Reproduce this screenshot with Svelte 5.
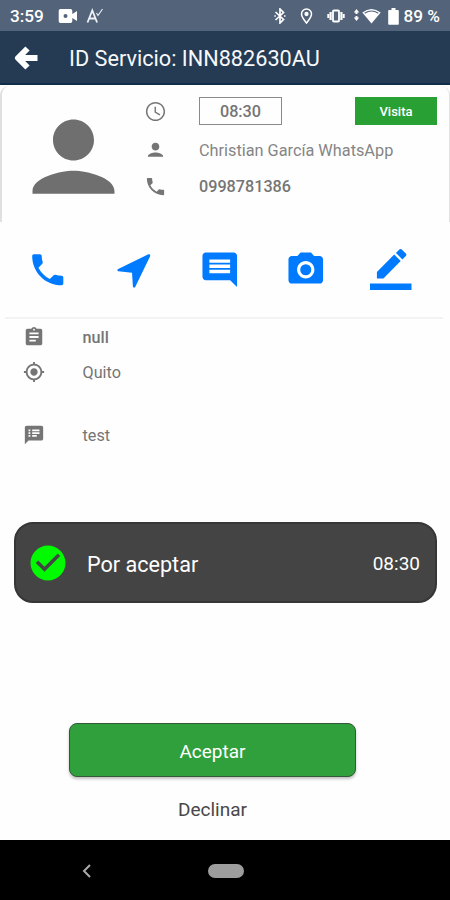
<script lang="ts">
	const icons = {
		clock:
			'M11.99 2C6.47 2 2 6.48 2 12s4.47 10 9.99 10C17.52 22 22 17.52 22 12S17.52 2 11.99 2zM12 20.4c-4.64 0-8.4-3.76-8.4-8.4s3.76-8.4 8.4-8.4 8.4 3.76 8.4 8.4-3.76 8.4-8.4 8.4zM12.5 7H11v6l5.25 3.15.75-1.23-4.5-2.67z',
		person:
			'M12 12c2.21 0 4-1.79 4-4s-1.79-4-4-4-4 1.79-4 4 1.79 4 4 4zm0 2c-2.67 0-8 1.34-8 4v.5h16V18c0-2.66-5.33-4-8-4z',
		phone:
			'M6.62 10.79c1.44 2.83 3.76 5.14 6.59 6.59l2.2-2.2c.27-.27.67-.36 1.02-.24 1.12.37 2.33.57 3.57.57.55 0 1 .45 1 1V20c0 .55-.45 1-1 1-9.39 0-17-7.61-17-17 0-.55.45-1 1-1h3.5c.55 0 1 .45 1 1 0 1.25.2 2.45.57 3.57.11.35.03.74-.25 1.02l-2.2 2.2z',
		navigate:
			'M20.2 3.2 L3 11.6 C2.3 12 2.4 12.8 3.1 12.9 L11 13.7 L11.5 21.6 C11.6 22.5 12.5 22.6 12.9 21.8 L21.4 4.3 C21.8 3.3 21.1 2.8 20.2 3.2z',
		comment:
			'M21.99 4c0-1.1-.89-2-1.99-2H4c-1.1 0-2 .9-2 2v12c0 1.1.9 2 2 2h14l4 4-.01-18zM18 14H6v-2h12v2zm0-3H6V9h12v2zm0-3H6V6h12v2z',
		camera:
			'M12 8.8a3.2 3.2 0 1 0 0 6.4 3.2 3.2 0 1 0 0-6.4zM9 2L7.17 4H4c-1.1 0-2 .9-2 2v12c0 1.1.9 2 2 2h16c1.1 0 2-.9 2-2V6c0-1.1-.9-2-2-2h-3.17L15 2H9zm3 15c-2.76 0-5-2.24-5-5s2.24-5 5-5 5 2.24 5 5-2.24 5-5 5z',
		edit: 'M17.75 7L14 3.25l-10 10V17h3.75l10-10zm2.96-2.96c.39-.39.39-1.02 0-1.41L18.37.29c-.39-.39-1.02-.39-1.41 0L15 2.25 18.75 6l1.96-1.96zM0 20h24v4H0z',
		clipboard:
			'M19 3h-4.18C14.4 1.84 13.3 1 12 1c-1.3 0-2.4.84-2.82 2H5c-1.1 0-2 .9-2 2v14c0 1.1.9 2 2 2h14c1.1 0 2-.9 2-2V5c0-1.1-.9-2-2-2zm-7 0c.55 0 1 .45 1 1s-.45 1-1 1-1-.45-1-1 .45-1 1-1zm2 14H7v-2h7v2zm3-4H7v-2h10v2zm0-4H7V7h10v2z',
		location:
			'M12 8c-2.21 0-4 1.79-4 4s1.79 4 4 4 4-1.79 4-4-1.79-4-4-4zm8.94 3c-.46-4.17-3.77-7.48-7.94-7.94V1h-2v2.06C6.83 3.52 3.52 6.83 3.06 11H1v2h2.06c.46 4.17 3.77 7.48 7.94 7.94V23h2v-2.06c4.17-.46 7.48-3.77 7.94-7.94H23v-2h-2.06zM12 19c-3.87 0-7-3.13-7-7s3.13-7 7-7 7 3.13 7 7-3.13 7-7 7z',
		notes:
			'M20 2H4c-1.1 0-1.99.9-1.99 2L2 22l4-4h14c1.1 0 2-.9 2-2V4c0-1.1-.9-2-2-2zM8 14H6v-2h2v2zm0-3H6V9h2v2zm0-3H6V6h2v2zm7 6h-5v-2h5v2zm3-3h-8V9h8v2zm0-3h-8V6h8v2z',
		check:
			'M12 2C6.48 2 2 6.48 2 12s4.48 10 10 10 10-4.48 10-10S17.52 2 12 2zm-2 15l-5-5 1.41-1.41L10 14.17l7.59-7.59L19 8l-9 9z'
	};

	const actions = [
		{ icon: icons.phone, label: 'Llamar' },
		{ icon: icons.navigate, label: 'Navegar' },
		{ icon: icons.comment, label: 'Mensaje' },
		{ icon: icons.camera, label: 'Cámara' },
		{ icon: icons.edit, label: 'Firmar' }
	];

	const service = {
		id: 'INN882630AU',
		time: '08:30',
		type: 'Visita',
		client: 'Christian García WhatsApp',
		phone: '0998781386',
		task: 'null',
		city: 'Quito',
		notes: 'test',
		status: 'Por aceptar'
	};
</script>

{#snippet icon(path: string, size: number)}
	<svg width={size} height={size} viewBox="0 0 24 24" fill="currentColor" aria-hidden="true">
		<path d={path} />
	</svg>
{/snippet}

<div class="screen">
	<div class="statusbar">
		<span class="statusbar__clock">3:59</span>
		<svg width="20" height="16" viewBox="0 0 20 16" fill="#fff">
			<path fill-rule="evenodd" d="M2.5 1h10a1.8 1.8 0 0 1 1.8 1.8V6L19 3v10l-4.7-3v3.2a1.8 1.8 0 0 1-1.8 1.8h-10A1.8 1.8 0 0 1 .7 13.2V2.8A1.8 1.8 0 0 1 2.5 1zM7.5 6a2 2 0 1 0 0 4 2 2 0 1 0 0-4z" />
		</svg>
		<svg class="statusbar__assist" width="18" height="16" viewBox="0 0 18 16" fill="none" stroke="#eef1f5">
			<path d="M1.5 14.500L6.300 2.500l4.800 12M3.300 10.500h6" stroke-width="1.8" />
			<path d="M10.500 5l1.500 2.500L16.500 1" stroke-width="1.1" />
		</svg>
		<div class="statusbar__right">
			<svg width="12" height="16" viewBox="0 0 12 16" fill="none" stroke="#fff" stroke-width="1.7">
				<path d="M1.5 4l8 7.500L6 15V1l3.500 3.500-8 7.500" />
				<path d="M.3 8h1.500M10 8h1.500" />
			</svg>
			<svg width="13" height="16" viewBox="0 0 13 16" fill="none" stroke="#fff" stroke-width="1.5">
				<path d="M6.500 15C4 11.500 1.500 9 1.500 6a5 5 0 0 1 10 0c0 3-2.500 5.500-5 9z" />
				<circle cx="6.500" cy="6" r="1.400" fill="#fff" />
			</svg>
			<svg width="18" height="14" viewBox="0 0 18 14" fill="none" stroke="#fff" stroke-width="1.8">
				<rect x="6" y="1.500" width="6" height="11" rx=".8" />
				<path d="M3.600 3v8M14.400 3v8" stroke-width="2.200" />
				<path d="M1.300 5v4M16.700 5v4" stroke-width="2" />
			</svg>
			<svg width="28" height="16" viewBox="0 0 28 16" fill="#fff">
				<path d="M3.500 1L6.200 4.500H4.500V6h-2V4.500H.8zM3.500 13L.8 9.500h1.700V8h2v1.500h1.700z" />
				<path d="M9.300 4.500Q18.500-2.500 27.700 4.500L18.500 15.500z" />
				<path d="M11.700 5.300Q18.500.8 25.300 5.300" fill="none" stroke="#52637a" stroke-width="1.100" />
			</svg>
			<svg width="11" height="17" viewBox="0 0 11 17" fill="#fff">
				<path d="M3.500 0h4v2H10q.8 0 .8.800V16q0 .8-.8.800H1q-.8 0-.8-.8V2.800Q.2 2 1 2h2.500z" />
			</svg>
			<span class="statusbar__battery">89 %</span>
		</div>
	</div>

	<header class="appbar">
		<svg width="24" height="26" viewBox="0 0 24 26" fill="none" stroke="#fff" stroke-width="6" stroke-linejoin="round" aria-label="Atrás">
			<path d="M13.500 3.500L4 13l9.500 9.500M5 13h18.500" />
		</svg>
		<h1>ID Servicio: {service.id}</h1>
	</header>

	<section class="client">
		<div class="client__avatar">{@render icon(icons.person, 123)}</div>
		<div class="client__details">
			<div class="client__row client__row--time">
				{@render icon(icons.clock, 23)}
				<span class="client__time">{service.time}</span>
				<span class="client__tag">{service.type}</span>
			</div>
			<div class="client__row client__row--name">
				{@render icon(icons.person, 23)}
				<span class="client__name">{service.client}</span>
			</div>
			<div class="client__row client__row--phone">
				{@render icon(icons.phone, 23)}
				<span class="client__phone">{service.phone}</span>
			</div>
		</div>
	</section>

	<nav class="actions">
		{#each actions as action}
			<button aria-label={action.label}>{@render icon(action.icon, 41.5)}</button>
		{/each}
	</nav>

	<section class="info">
		<div class="info__row">
			{@render icon(icons.clipboard, 22)}
			<span class="info__task">{service.task}</span>
		</div>
		<div class="info__row info__row--city">
			{@render icon(icons.location, 22)}
			<span class="info__city">{service.city}</span>
		</div>
		<div class="info__row">
			{@render icon(icons.notes, 22)}
			<span class="info__notes">{service.notes}</span>
		</div>
	</section>

	<section class="state">
		<span class="state__check">{@render icon(icons.check, 42)}</span>
		<span class="state__label">{service.status}</span>
		<span class="state__time">{service.time}</span>
	</section>

	<div class="decision">
		<button class="decision__accept"><span>Aceptar</span></button>
		<button class="decision__decline"><span>Declinar</span></button>
	</div>

	<footer class="sysnav">
		<svg width="10" height="16" viewBox="0 0 10 16" fill="none" stroke="#aaa" stroke-width="2">
			<path d="M8 2L2 8l6 6" />
		</svg>
		<span class="sysnav__home"></span>
	</footer>
</div>

<style>
	:global(body) {
		margin: 0;
		background: #fff;
	}

	.screen {
		display: flex;
		flex-direction: column;
		width: 450px;
		height: 900px;
		overflow: hidden;
		box-sizing: border-box;
		background: #fefefe;
		color: #757575;
		font-family: Roboto, 'Liberation Sans', sans-serif;
		font-size: 16.2px;
	}

	.screen * {
		box-sizing: border-box;
	}

	svg {
		display: block;
		flex: none;
	}

	span,
	h1 {
		white-space: nowrap;
	}

	button {
		padding: 0;
		border: 0;
		background: none;
		font: inherit;
	}

	.statusbar {
		display: flex;
		align-items: center;
		height: 31px;
		flex: none;
		padding: 1px 10px 0 10px;
		background: #52637a;
		color: #fff;
		font-weight: 500;
		font-size: 17.2px;
	}

	.statusbar__clock {
		width: 48px;
	}

	.statusbar__assist {
		margin-left: 8px;
	}

	.statusbar__right {
		display: flex;
		align-items: center;
		margin-left: auto;
	}

	.statusbar__right svg:nth-child(2),
	.statusbar__right svg:nth-child(3) {
		margin-left: 14px;
	}

	.statusbar__right svg:nth-child(4) {
		margin-left: 8px;
	}

	.statusbar__right svg:nth-child(5) {
		margin-left: 7px;
	}

	.statusbar__battery {
		margin-left: 5px;
	}

	.appbar {
		display: flex;
		align-items: center;
		flex: none;
		height: 54px;
		padding: 2px 14px 0;
		border-bottom: 2px solid #102d4c;
		background: #243b53;
	}

	.appbar h1 {
		margin: 0 0 0 31px;
		color: #f7f8fa;
		font-size: 21.7px;
		font-weight: 400;
	}

	.client {
		display: flex;
		flex: none;
		height: 136px;
		margin: 1px 0 0;
		border: solid #e0e0e0;
		border-width: 0 1px 0 2px;
		border-radius: 9px 9px 0 0;
	}

	.client__avatar {
		width: 142px;
		padding: 13px 0 0 10px;
		color: #6f6f6f;
	}

	.client__details {
		flex: 1;
		padding: 11px 12px 0 0;
	}

	.client__row {
		display: flex;
		align-items: center;
		gap: 32px;
	}

	.client__row--time {
		height: 28px;
	}

	.client__row--name {
		height: 50px;
	}

	.client__row--phone {
		height: 22px;
	}

	.client__time {
		width: 83px;
		height: 28px;
		border: 1px solid #8a8a8a;
		font-weight: 500;
		line-height: 27px;
		text-align: center;
	}

	.client__tag {
		width: 82px;
		height: 28px;
		margin-left: auto;
		background: #28a034;
		color: #fff;
		font-size: 13px;
		font-weight: 500;
		line-height: 29px;
		text-align: center;
	}

	.client__name {
		padding-top: 1px;
		color: #858585;
		font-size: 16.3px;
	}

	.client__phone {
		font-weight: 500;
	}

	.actions {
		display: grid;
		grid-template-columns: repeat(5, 1fr);
		flex: none;
		height: 97px;
		margin: 0 7px 0 5px;
		padding: 0 9px 0 0;
		border-bottom: 2px solid #f3f3f3;
		color: #007bff;
	}

	.actions button {
		display: grid;
		place-items: center;
		color: inherit;
	}

	.info {
		flex: none;
		padding: 6px 23px 0;
	}

	.info__row {
		display: flex;
		align-items: center;
		gap: 37.5px;
		height: 24px;
	}

	.info__row--city {
		margin: 11px 0 39px;
	}

	.info__task {
		font-weight: 500;
	}

	.state {
		display: flex;
		align-items: center;
		flex: none;
		height: 81px;
		margin: 75px 13px 0 14px;
		padding: 1px 15px 0 11px;
		border: 2px solid #363636;
		border-radius: 19px;
		background: #444;
		color: #fff;
	}

	.state__check {
		color: #00fa00;
	}

	.state__label {
		margin-left: 18px;
		padding-top: 2px;
		font-size: 21.6px;
	}

	.state__time {
		margin-left: auto;
		padding-top: 1px;
		font-size: 19px;
	}

	.decision {
		display: flex;
		flex-direction: column;
		flex: 1;
		width: 287px;
		margin: 120px 0 0 69px;
	}

	.decision__accept {
		height: 54px;
		padding-top: 2px;
		border: 1px solid #34583a;
		border-radius: 8px;
		background: #2fa03b;
		box-shadow: 0 2px 3px rgba(0, 0, 0, 0.25);
		color: #fff;
		font-size: 19px;
	}

	.decision__decline {
		height: 63px;
		padding-top: 2px;
		color: #484848;
		font-size: 19px;
	}

	.sysnav {
		display: flex;
		align-items: center;
		flex: none;
		height: 60px;
		padding: 1px 0 0 82px;
		background: #000;
	}

	.sysnav__home {
		width: 36px;
		height: 14px;
		margin-left: 116px;
		border-radius: 7px;
		background: #9d9d9d;
	}
</style>
